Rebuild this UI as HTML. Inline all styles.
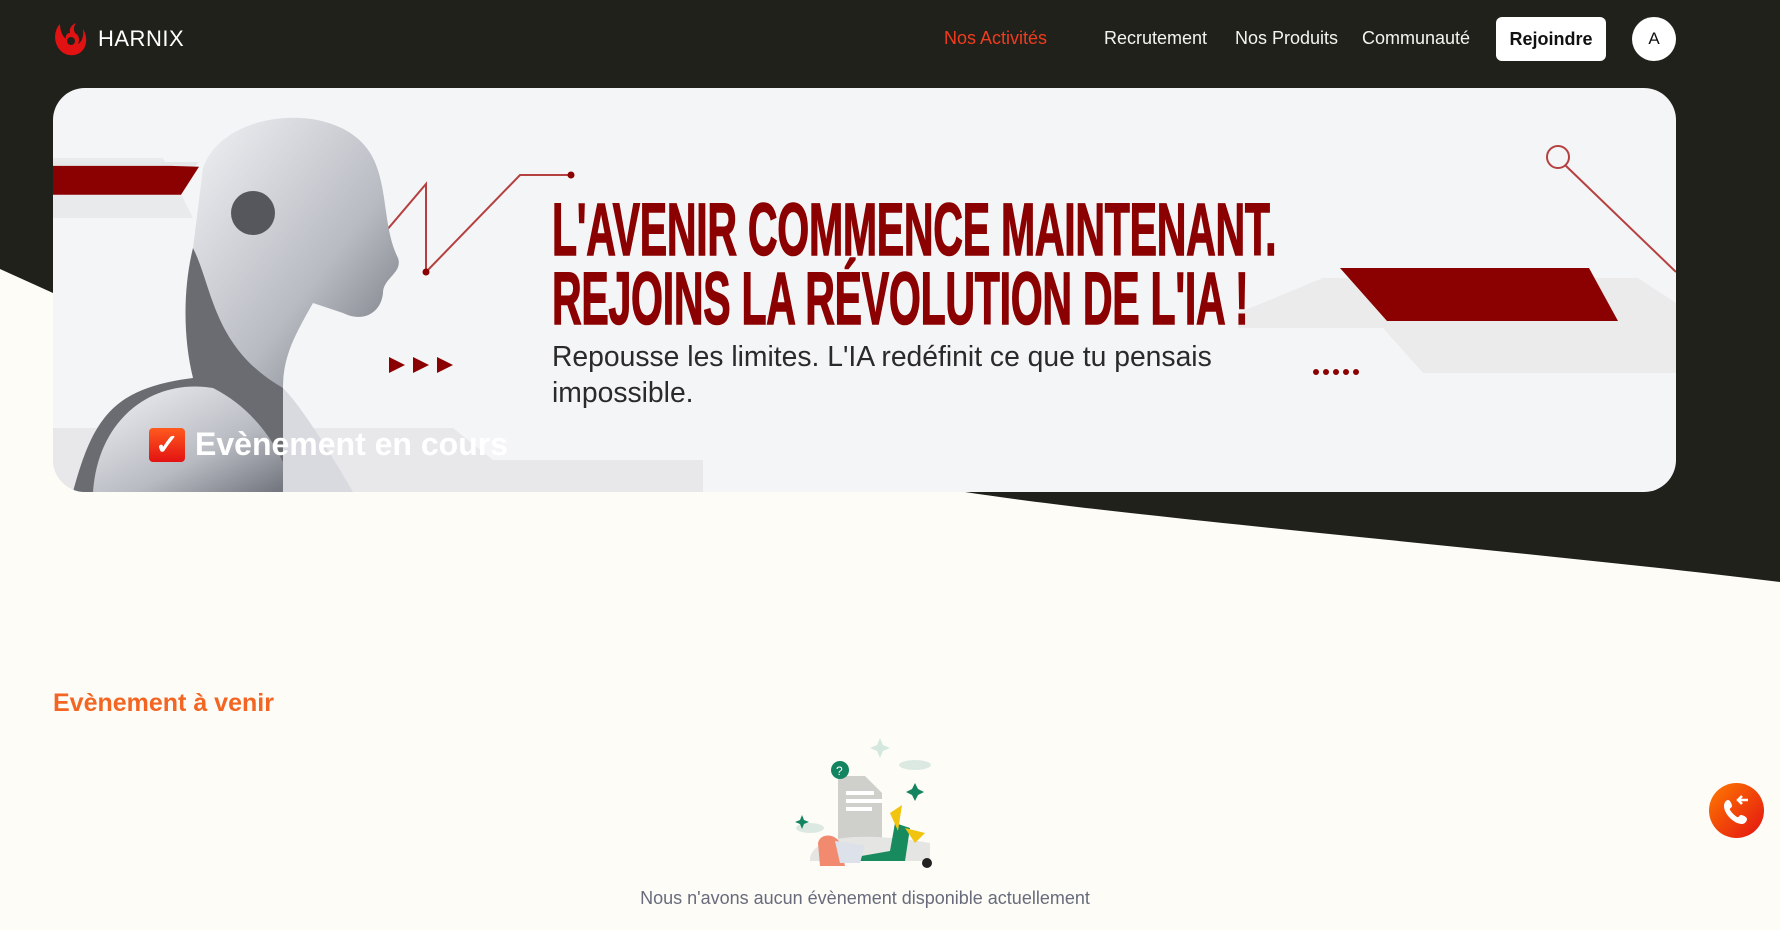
<!DOCTYPE html>
<html><head><meta charset="utf-8"><style>
*{margin:0;padding:0;box-sizing:border-box}
body{width:1780px;height:930px;background:#fdfcf7;font-family:"Liberation Sans",sans-serif;position:relative;overflow:hidden}
.abs{position:absolute}
.nav{font-size:18px;color:#f3f3f0;top:28px}
.hl{position:absolute;left:552px;color:#8b0000;font-weight:bold;font-size:74px;line-height:1;white-space:nowrap;transform-origin:0 0;letter-spacing:-0.5px;-webkit-text-stroke:1.5px #8b0000}
</style></head><body>
<svg class="abs" style="left:0;top:0" width="1780" height="930">
<path d="M0 0H1780V582C1500 548 1150 520 965 492L53 293L0 269Z" fill="#20211a"/>
</svg>
<svg class="abs" style="left:52px;top:20px" width="36" height="38" viewBox="0 0 36 38">
<path d="M8 4C2 10 1 22 8 30c5 6 15 7 21 2c6-5 7-15 2-23c1 7-1 13-5 15c2-4 1-9-3-11c-2-4-1-7 1-10c-5 2-7 6-6 10c-3 0-5 3-4 6c-4-3-6-9-6-15z" fill="#e31212"/>
<circle cx="19" cy="21" r="4" fill="#20211a"/>
</svg>
<div class="abs" style="left:98px;top:26px;font-size:22px;color:#fff;letter-spacing:0.5px">HARNIX</div>
<div class="abs nav" style="left:944px;color:#f03c1e">Nos Activités</div>
<div class="abs nav" style="left:1104px">Recrutement</div>
<div class="abs nav" style="left:1235px">Nos Produits</div>
<div class="abs nav" style="left:1362px">Communauté</div>
<div class="abs" style="left:1496px;top:17px;width:110px;height:44px;background:#fff;border-radius:6px;font-weight:bold;font-size:18px;line-height:44px;text-align:center;color:#111">Rejoindre</div>
<div class="abs" style="left:1632px;top:17px;width:44px;height:44px;background:#fff;border-radius:50%;font-size:17px;line-height:44px;text-align:center;color:#111">A</div>
<div class="abs" style="left:53px;top:88px;width:1623px;height:404px;background:#f4f5f7;border-radius:32px;overflow:hidden">
<svg width="1623" height="404" style="position:absolute;left:0;top:0">
<polygon points="0,70 110,70 140,130 0,130" fill="#e9eaec"/>
<polygon points="0,102 120,102 146,74 0,74" fill="#e6e7e9"/>
<polygon points="0,101 118,101 146,102 128,133 0,133" fill="#8b0000" transform="translate(0,-13) scale(1,0.9)"/>
<polygon points="1185,225 1270,190 1585,190 1623,215 1623,285 1370,285 1330,240 1185,240" fill="#ebebec"/>
<polygon points="1287,180 1536,180 1565,233 1334,233" fill="#8b0000"/>
<polygon points="0,340 400,340 440,372 650,372 650,404 0,404" fill="#e8e8ea"/>
<polyline points="322,156 373,96 373,184 467,87 518,87" fill="none" stroke="#b54040" stroke-width="2"/>
<circle cx="373" cy="184" r="3.5" fill="#8b0000"/><circle cx="518" cy="87" r="3.5" fill="#8b0000"/>
<circle cx="1505" cy="69" r="11" fill="none" stroke="#b54040" stroke-width="2"/>
<line x1="1512" y1="77" x2="1623" y2="184" stroke="#b54040" stroke-width="2"/>
<polygon points="336,269 352,277 336,285" fill="#8b0000"/><polygon points="360,269 376,277 360,285" fill="#8b0000"/><polygon points="384,269 400,277 384,285" fill="#8b0000"/>
<g fill="#8b0000"><circle cx="1263" cy="284" r="3"/><circle cx="1273" cy="284" r="3"/><circle cx="1283" cy="284" r="3"/><circle cx="1293" cy="284" r="3"/><circle cx="1303" cy="284" r="3"/></g>
<defs><linearGradient id="g" x1="0" y1="0" x2="1" y2="1"><stop offset="0" stop-color="#f2f3f6"/><stop offset=".6" stop-color="#b8bbc2"/><stop offset="1" stop-color="#6c6f77"/></linearGradient></defs>
<path d="M150 80C170 20 290 10 320 70C335 100 330 140 345 170C350 185 330 190 330 205C328 225 310 235 290 225L260 215C240 250 230 270 230 300L150 300C140 250 130 200 140 160Z" fill="url(#g)"/>
<path d="M140 160C160 200 160 260 230 300L270 404L20 404C40 330 60 300 140 290C130 250 130 200 140 160Z" fill="#6a6c72"/>
<path d="M40 404C45 330 100 290 160 300C200 320 230 360 240 404Z" fill="url(#g)"/>
<path d="M230 300C250 320 280 370 300 404L230 404Z" fill="#d8dae0"/>
<circle cx="200" cy="125" r="22" fill="#55575d"/>
</svg>
<div class="abs" style="left:96px;top:340px;width:36px;height:34px;background:linear-gradient(#ff5a1e,#e31212);border-radius:4px;color:#fff;font-size:28px;line-height:34px;text-align:center;font-weight:bold">✓</div>
<div class="abs" style="left:142px;top:338px;font-size:32px;font-weight:bold;color:#fff">Evènement en cours</div>
</div>
<div class="hl" style="top:193px;transform:scaleX(0.555)">L'AVENIR COMMENCE MAINTENANT.</div>
<div class="hl" style="top:262px;transform:scaleX(0.555)">REJOINS LA RÉVOLUTION DE L'IA !</div>
<div class="abs" style="left:552px;top:338px;font-size:28.3px;color:#2a2a2a;line-height:36px;width:680px">Repousse les limites. L'IA redéfinit ce que tu pensais impossible.</div>
<div class="abs" style="left:53px;top:689px;font-size:25px;font-weight:bold;color:#f26522">Evènement à venir</div>
<svg class="abs" style="left:790px;top:733px" width="150" height="140">
<path d="M90 5l3 7 7 3-7 3-3 7-3-7-7-3 7-3z" fill="#d5e8e0"/>
<ellipse cx="125" cy="32" rx="16" ry="5" fill="#dce9e3"/>
<ellipse cx="20" cy="95" rx="14" ry="5" fill="#dce9e3"/>
<path d="M48 43H75L92 60V110H48Z" fill="#cfd0cb"/>
<rect x="56" y="58" width="28" height="4" fill="#fff"/><rect x="56" y="66" width="36" height="4" fill="#fff"/><rect x="56" y="74" width="26" height="4" fill="#fff"/>
<circle cx="50" cy="37" r="9" fill="#13845f"/><text x="46" y="42" font-size="12" fill="#fff" font-family="Liberation Sans">?</text>
<path d="M20 125C25 100 80 100 140 110V128H20Z" fill="#e5e6e3"/>
<path d="M60 125L100 118L105 90L120 95L115 128H60Z" fill="#178a5e"/>
<path d="M100 80L112 72L108 98Z" fill="#f1c40f"/><path d="M115 95L135 100L125 110Z" fill="#f1c40f"/>
<path d="M28 110C30 100 45 100 50 110L55 133H30Z" fill="#f28a70"/>
<path d="M45 108L75 112L70 130H50Z" fill="#dde2ea"/>
<circle cx="137" cy="130" r="5" fill="#222"/>
<path d="M125 50l3 6 6 3-6 3-3 6-3-6-6-3 6-3z" fill="#13845f"/>
<path d="M12 82l2 5 5 2-5 2-2 5-2-5-5-2 5-2z" fill="#13845f"/>
</svg>
<div class="abs" style="left:0;width:1730px;top:888px;text-align:center;font-size:18px;color:#676b7b">Nous n'avons aucun évènement disponible actuellement</div>
<div class="abs" style="left:1709px;top:783px;width:55px;height:55px;border-radius:50%;background:linear-gradient(135deg,#ff7a00,#e31212)">
<svg width="55" height="55" viewBox="0 0 55 55"><path d="M19 17c2 0 4 4 4 6s-3 2-2 4c2 3 4 5 7 7c2 1 2-2 4-2s6 2 6 4-2 5-5 5c-8 0-18-10-18-18c0-3 2-6 4-6z" fill="#fff"/><path d="M29 17h10M33 13l-4 4 4 4" stroke="#fff" stroke-width="2.5" fill="none"/></svg>
</div>
</body></html>
